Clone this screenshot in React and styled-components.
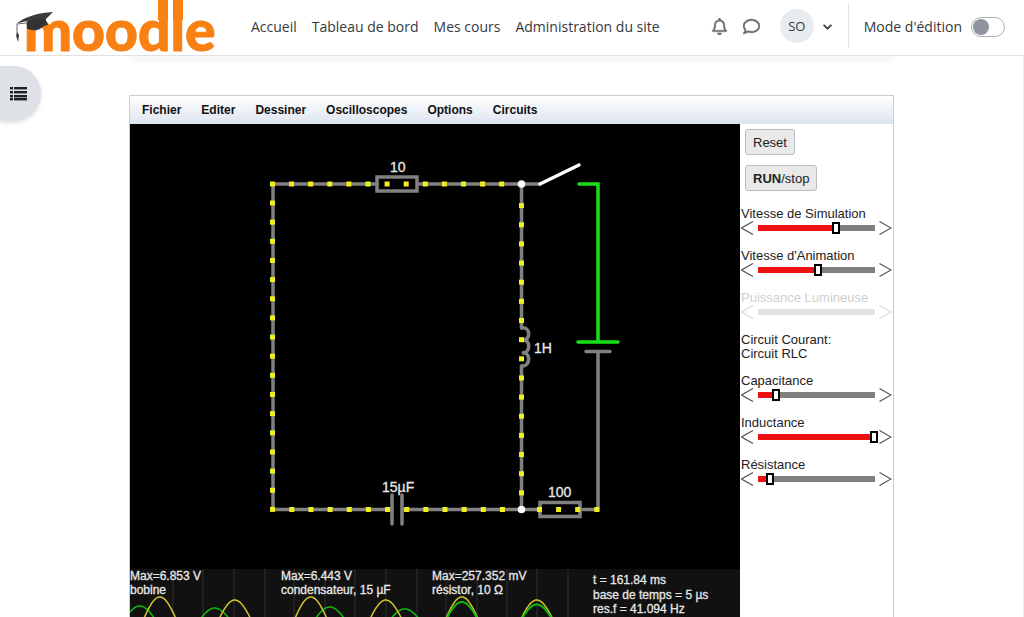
import React, { useState } from 'react'
import styled, { createGlobalStyle } from 'styled-components'
import { FaRegBell, FaRegComment, FaChevronDown } from 'react-icons/fa6'

const GlobalStyle = createGlobalStyle`
    * {
        box-sizing: border-box;
    }
    body {
        margin: 0;
        background-color: #fff;
        font-family: "Liberation Sans", Arial, sans-serif;
        overflow: hidden;
    }
    button {
        font-family: inherit;
        cursor: pointer;
    }
`

const Page = styled.div`
    height: 100vh;
    display: flex;
    flex-direction: column;
`

const Header = styled.header`
    height: 56px;
    flex-shrink: 0;
    display: flex;
    align-items: center;
    padding: 0 19px 2px 0;
    border-bottom: 1px solid #dee2e6;
    font-family: "Open Sans", sans-serif;
    font-size: 14px;
    color: #343a40;
`

const LogoLink = styled.a`
    display: flex;
    align-self: flex-start;
    margin-right: 31px;
    svg {
        overflow: visible;
    }
`

const Nav = styled.nav`
    display: flex;
    gap: 15px;
    flex: 1;
`

const NavLink = styled.a`
    color: inherit;
    text-decoration: none;
    white-space: nowrap;
`

const UserTools = styled.div`
    display: flex;
    align-items: center;
    align-self: flex-start;
    height: 44px;
    margin-top: 4px;
    padding-right: 16px;
    margin-right: 15px;
    border-right: 1px solid #dee2e6;
`

const IconButton = styled.button`
    display: flex;
    align-items: center;
    justify-content: center;
    width: 32px;
    height: 32px;
    padding: 0;
    border: none;
    background: none;
    color: #6a6e73;
    font-size: 17px;
    svg {
        stroke: #6a6e73;
        stroke-width: 12px;
    }
`

const UserButton = styled.button`
    display: flex;
    align-items: center;
    gap: 9px;
    margin-left: 12px;
    padding: 0;
    border: none;
    background: none;
    color: #343a40;
    font-size: 9px;
    svg {
        stroke: #343a40;
        stroke-width: 50px;
        overflow: visible;
    }
`

const Avatar = styled.span`
    width: 34px;
    height: 34px;
    display: flex;
    align-items: center;
    justify-content: center;
    border-radius: 50%;
    background-color: #e9ecef;
    font-family: "Open Sans", sans-serif;
    font-size: 13px;
`

const EditLabel = styled.label`
    display: flex;
    align-items: center;
    gap: 9px;
    white-space: nowrap;
`

const Switch = styled.input`
    appearance: none;
    width: 34px;
    height: 20px;
    margin: 0;
    padding: 1px;
    border: 1px solid #adb0b4;
    border-radius: 10px;
    background-color: #fff;
    &::before {
        content: "";
        display: block;
        width: 16px;
        height: 16px;
        border-radius: 50%;
        background-color: #8f959e;
    }
    &:checked::before {
        margin-left: auto;
    }
`

const Body = styled.div`
    flex: 1;
    min-height: 0;
    display: flex;
    border-right: 1px solid #eceef0;
`

const Rail = styled.aside`
    width: 129px;
    flex-shrink: 0;
    padding-top: 10px;
`

const DrawerButton = styled.button`
    display: flex;
    align-items: center;
    width: 41px;
    height: 55px;
    padding: 0 0 0 10px;
    border: none;
    border-radius: 0 28px 28px 0;
    background-color: #dee2e6;
    box-shadow: 0 2px 4px rgba(0, 0, 0, 0.12);
`

const Main = styled.main`
    flex: 1;
    min-width: 0;
    display: flex;
    flex-direction: column;
    margin-right: 129px;
`

const CardEnd = styled.div`
    height: 7px;
    margin-bottom: 32px;
    flex-shrink: 0;
    border-radius: 0 0 8px 8px;
    background-color: #f6f8f9;
`

const Simulator = styled.section`
    flex: 1;
    min-height: 0;
    display: flex;
    flex-direction: column;
    border: 1px solid #ccc;
    border-bottom: none;
`

const MenuBar = styled.div`
    height: 28px;
    flex-shrink: 0;
    display: flex;
    align-items: center;
    gap: 20px;
    padding: 0 12px;
    background: linear-gradient(#fff, #dde4f0);
`

const MenuItem = styled.button`
    padding: 0;
    border: none;
    background: none;
    color: #111;
    font-size: 12px;
    font-weight: bold;
`

const Workspace = styled.div`
    flex: 1;
    min-height: 0;
    display: flex;
`

const Board = styled.div`
    flex: 1;
    min-width: 0;
    overflow: hidden;
    background-color: #000;
`

const Drawing = styled.svg`
    display: block;
    width: 100%;
    background-color: ${props => props.$bg};
    fill: none;
    text {
        fill: #e8e8e8;
        stroke: #e8e8e8;
        stroke-width: 0.3px;
        font-family: "Liberation Sans", Arial, sans-serif;
        font-size: ${props => props.$size};
    }
`

const Panel = styled.div`
    width: 153px;
    flex-shrink: 0;
    display: flex;
    flex-direction: column;
    align-items: stretch;
    padding: 0 1px;
    color: #222;
    font-size: 13px;
    line-height: 14px;
`

const PanelButton = styled.button`
    align-self: flex-start;
    height: 26px;
    margin: 5px 4px;
    padding: 0 7px;
    border: 1px solid #bbb;
    border-radius: 3px;
    background-color: #e9e9e9;
    color: #222;
    font-size: 13px;
    & + & {
        margin-bottom: 16px;
    }
`

const Control = styled.div`
    margin-bottom: 14px;
    opacity: ${props => props.$off ? 0.22 : 1};
`

const ControlLabel = styled.label`
    display: block;
`

const SliderRow = styled.div`
    display: flex;
    align-items: center;
    height: 14px;
`

const Arrow = styled.button`
    display: flex;
    width: 13px;
    padding: 0;
    border: none;
    background: none;
`

const Range = styled.input`
    appearance: none;
    flex: 1;
    min-width: 0;
    height: 14px;
    margin: 0;
    background: transparent;
    &::-webkit-slider-runnable-track {
        height: 6px;
        background: linear-gradient(
            to right,
            transparent 4px,
            #e11 4px,
            #e11 ${props => props.$fill}%,
            #808080 ${props => props.$fill}%,
            #808080 calc(100% - 4px),
            transparent calc(100% - 4px)
        );
    }
    &::-webkit-slider-thumb {
        appearance: none;
        width: 8px;
        height: 12px;
        margin: -3px 0 0;
        border: 2px solid #000;
        background-color: #fff;
        visibility: ${props => props.disabled ? 'hidden' : 'visible'};
    }
`

const CircuitName = styled.p`
    margin: 0 0 13px;
`

const navItems = ['Accueil', 'Tableau de bord', 'Mes cours', 'Administration du site']
const menuItems = ['Fichier', 'Editer', 'Dessiner', 'Oscilloscopes', 'Options', 'Circuits']

const Logo = () => (
    <svg width="220" height="55" viewBox="0 0 220 55" role="img" aria-label="moodle">
        <text x="24" y="51" fill="#f98012" stroke="#f98012" strokeWidth="1" fontFamily="Lato, sans-serif" fontWeight="900" fontSize="57">moodle</text>
        {/* tall stems of the d and the l */}
        <path d="M158 0 H168 V20 H158 Z M173 0 H183 V20 H173 Z" fill="#f98012" />
        <path d="M26 23 L17 24 L17 34" fill="none" stroke="#444" strokeWidth="0.8" />
        <path d="M17 32 L16.200 36 L18 42 L19 35 Z" fill="#333" />
        <path d="M16.500 23.500 C25 17 37 13 53 12 L45 20 C35 19 27 21 16.500 23.500 Z" fill="#3c3c3c" />
        <path d="M26.500 22 C33 18 39 17 45.500 19 L48 25 C43 25 42 29 37 30 C33 31 29 29 27 29 Z" fill="#333" />
    </svg>
)

const ListIcon = () => (
    <svg width="17" height="14" viewBox="0 0 17 14" fill="#1d2125">
        {[0, 4, 8, 11].map(y => (
            <g key={y}>
                <rect x="0" y={y} width="3" height="2.400" />
                <rect x="4" y={y} width="13" height="2.400" />
            </g>
        ))}
    </svg>
)

// evenly spaced current dots along a wire
const Dots = ({ x, y, dx = 0, dy = 0, count }) => {
    let dots = []
    for (let i = 0; i < count; i++) {
        dots.push(<rect key={i} x={x + dx * i - 2.5} y={y + dy * i - 2.5} width="5" height="5" />)
    }
    return <g fill="#f0f020">{dots}</g>
}

const Circuit = () => (
    <Drawing viewBox="130 124 610 445" $bg="#000" $size="14px">
        <g stroke="#808080" strokeWidth="3.500" strokeLinecap="round">
            <path d="M377 184 H273 V509.500 H392" />
            <path d="M418 184 H540" />
            <path d="M404 509.500 H540 M580 509.500 H598 V352" />
            <path d="M392 495 V524 M402 495 V524" />
            <path d="M521.500 184 V328 M521.500 366 V509" />
            <path d="M521.500 328 C531 326 531 341 522 340.500 C531 338 531 354 522 353 C531 351 531 367 521.500 366" />
            <path d="M586 351.500 H610" />
            <rect x="377" y="177" width="40" height="14" strokeLinejoin="miter" />
            <rect x="540" y="502.500" width="40" height="14" strokeLinejoin="miter" />
        </g>
        <path d="M579 184 H598 V342 M578 342 H618" stroke="#18e018" strokeWidth="3.500" strokeLinecap="round" />
        <path d="M540 184 L579 165" stroke="#fff" strokeWidth="3.500" strokeLinecap="round" />
        <Dots x={272.5} y={184} dx={19.1} count={13} />
        <Dots x={272.5} y={203} dy={19.15} count={17} />
        <Dots x={291.8} y={509.5} dx={19.15} count={12} />
        <Dots x={539.5} y={509.5} dx={19.1} count={4} />
        <Dots x={521.5} y={205.6} dy={19.15} count={16} />
        <circle cx="521.500" cy="184" r="3.800" fill="#fff" />
        <circle cx="521.500" cy="509.500" r="3.800" fill="#fff" />
        <text x="390" y="172">10</text>
        <text x="382" y="492">15µF</text>
        <text x="534" y="353">1H</text>
        <text x="548" y="497">100</text>
    </Drawing>
)

// damped sine, first crest at `crest`
const wave = (from, to, crest, amp) => {
    let d = ''
    for (let x = from; x <= to; x++) {
        const a = amp * Math.exp(-(x - crest) / 650)
        const y = 625 - a * Math.cos((x - crest) * 2 * Math.PI / 75)
        d += `${d ? 'L' : 'M'}${x} ${y.toFixed(1)}`
    }
    return d
}

const gridLines = [173, 203, 234, 265, 294, 325, 355, 386, 417, 446, 477, 507, 537, 568]

const Scopes = () => (
    <Drawing viewBox="130 569 610 48" $bg="#111" $size="12px">
        {gridLines.map(x => <path key={x} d={`M${x} 569 V617`} stroke="#303030" />)}
        <g stroke="#12b812" strokeWidth="1.500">
            <path d={wave(130, 275, 140, 19)} />
            <path d={wave(281, 428, 330, 18)} />
        </g>
        <g stroke="#d2c430" strokeWidth="1.500">
            <path d={wave(130, 275, 160, 28)} />
            <path d={wave(281, 428, 311, 28)} />
            <path d={wave(432, 580, 462, 28)} />
        </g>
        <path d={wave(432, 580, 462, 23)} stroke="#12b812" strokeWidth="2" />
        <text x="130" y="580">Max=6.853 V</text>
        <text x="130" y="594">bobine</text>
        <text x="281" y="580">Max=6.443 V</text>
        <text x="281" y="594">condensateur, 15 µF</text>
        <text x="432" y="580">Max=257.352 mV</text>
        <text x="432" y="594">résistor, 10 Ω</text>
        <text x="593" y="584">t = 161.84 ms</text>
        <text x="593" y="599">base de temps = 5 µs</text>
        <text x="593" y="613">res.f = 41.094 Hz</text>
    </Drawing>
)

const Chevron = ({ flip }) => (
    <svg width="13" height="14" viewBox="0 0 13 14" fill="none" stroke="#555" strokeWidth="1.200">
        <path d={flip ? 'M0.500 0.500 L12 7 L0.500 13.500' : 'M12 0.500 L0.500 7 L12 13.500'} />
    </svg>
)

const SliderControl = ({ id, label, start, off }) => {
    const [value, setValue] = useState(start)
    const step = (n) => setValue(Math.min(100, Math.max(0, value + n)))

    return (
        <Control $off={off}>
            <ControlLabel htmlFor={id}>{label}</ControlLabel>
            <SliderRow>
                <Arrow aria-label="Diminuer" disabled={off} onClick={() => step(-1)}><Chevron /></Arrow>
                <Range
                    id={id}
                    type="range"
                    value={value}
                    $fill={value}
                    disabled={off}
                    onChange={(e) => setValue(Number(e.target.value))}
                />
                <Arrow aria-label="Augmenter" disabled={off} onClick={() => step(1)}><Chevron flip /></Arrow>
            </SliderRow>
        </Control>
    )
}

const App = () => {
    return (
        <Page>
            <GlobalStyle />
            <Header>
                <LogoLink href="#"><Logo /></LogoLink>
                <Nav>
                    {navItems.map(item => <NavLink href="#" key={item}>{item}</NavLink>)}
                </Nav>
                <UserTools>
                    <IconButton aria-label="Notifications"><FaRegBell /></IconButton>
                    <IconButton aria-label="Messages"><FaRegComment /></IconButton>
                    <UserButton>
                        <Avatar>SO</Avatar>
                        <FaChevronDown />
                    </UserButton>
                </UserTools>
                <EditLabel>
                    Mode d'édition
                    <Switch type="checkbox" />
                </EditLabel>
            </Header>
            <Body>
                <Rail>
                    <DrawerButton aria-label="Index du cours"><ListIcon /></DrawerButton>
                </Rail>
                <Main>
                    <CardEnd />
                    <Simulator>
                        <MenuBar>
                            {menuItems.map(item => <MenuItem key={item}>{item}</MenuItem>)}
                        </MenuBar>
                        <Workspace>
                            <Board>
                                <Circuit />
                                <Scopes />
                            </Board>
                            <Panel>
                                <PanelButton>Reset</PanelButton>
                                <PanelButton><b>RUN</b>/stop</PanelButton>
                                <SliderControl id="simulation" label="Vitesse de Simulation" start={67} />
                                <SliderControl id="animation" label="Vitesse d'Animation" start={51} />
                                <SliderControl id="puissance" label="Puissance Lumineuse" start={0} off />
                                <CircuitName>Circuit Courant:<br />Circuit RLC</CircuitName>
                                <SliderControl id="capacitance" label="Capacitance" start={15} />
                                <SliderControl id="inductance" label="Inductance" start={99} />
                                <SliderControl id="resistance" label="Résistance" start={10} />
                            </Panel>
                        </Workspace>
                    </Simulator>
                </Main>
            </Body>
        </Page>
    )
}

export default App
